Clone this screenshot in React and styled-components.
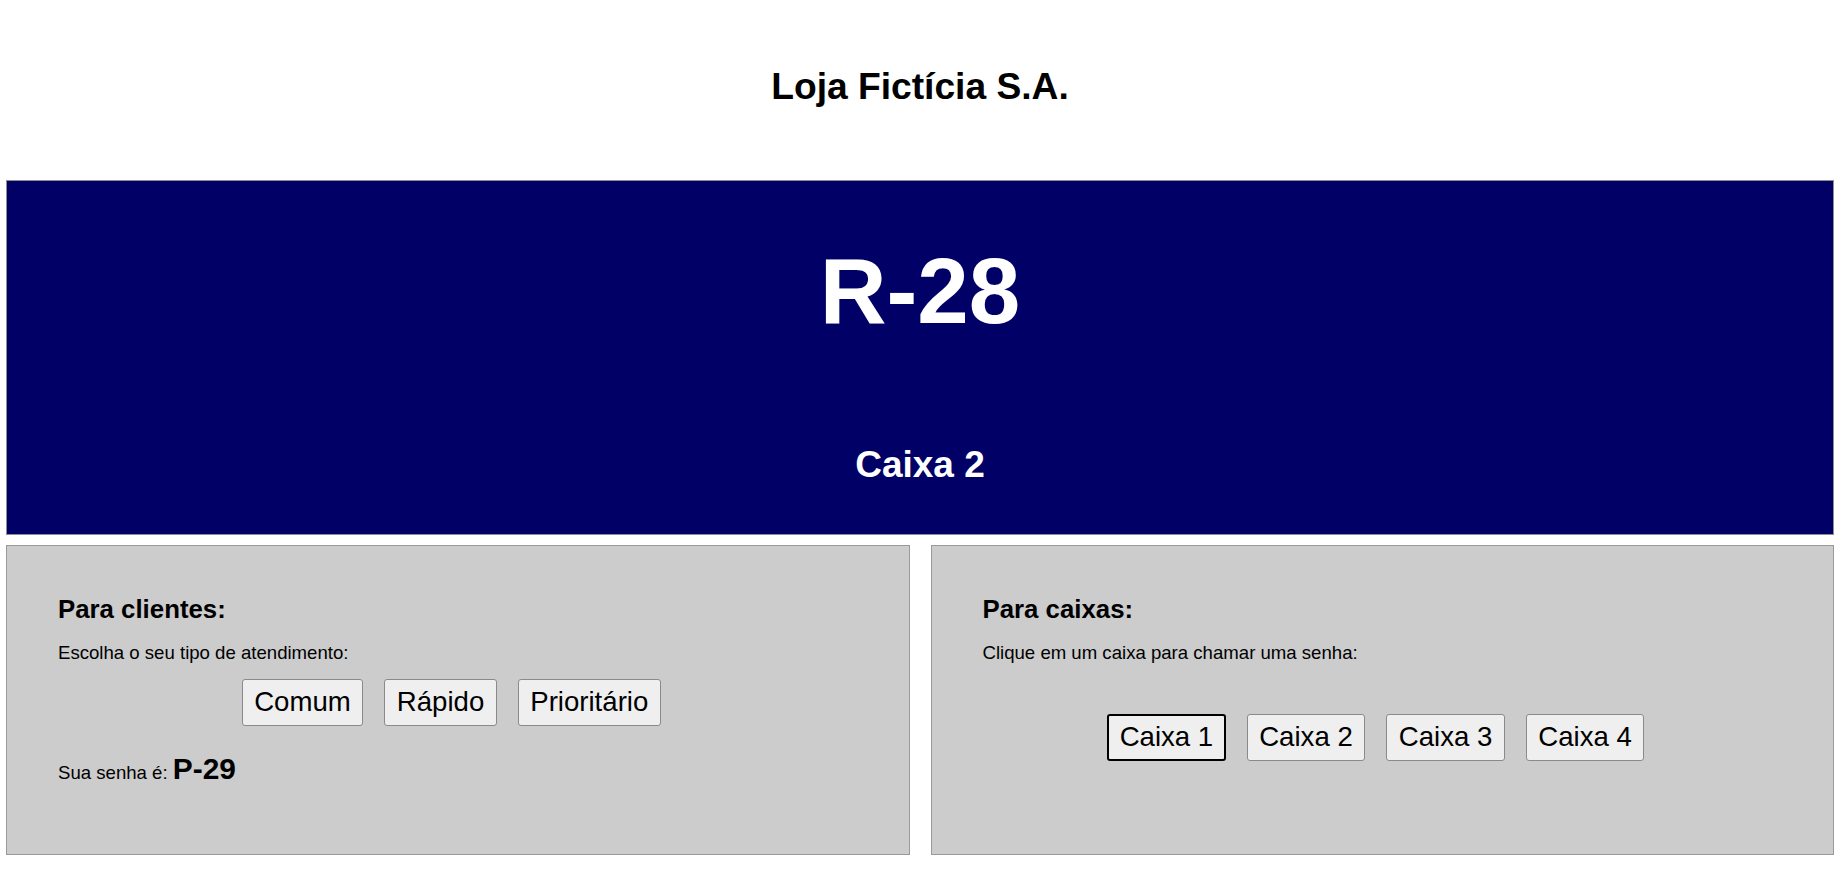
import React from 'react'
import styled, { createGlobalStyle } from 'styled-components'

const GlobalStyle = createGlobalStyle`
  html, body {
    margin: 0;
    padding: 0;
    background: #fff;
  }
  body {
    font-family: "Liberation Sans", Arial, sans-serif;
    line-height: 1.15;
    color: #000;
  }
`

const Page = styled.div`
  padding: 65px 8px 0 6px;
`

const StoreTitle = styled.h1`
  margin: 0 0 72px;
  font-size: 37.2px;
  font-weight: bold;
  text-align: center;
`

const Display = styled.section`
  box-sizing: border-box;
  height: 355px;
  background: #000066;
  border: 1px solid #8f8f8f;
  color: #fff;
  display: flex;
  flex-direction: column;
  align-items: center;
  padding-top: 57px;
`

const CurrentTicket = styled.div`
  font-size: 92.5px;
  font-weight: bold;
`

const CurrentDesk = styled.div`
  margin-top: 100px;
  font-size: 37px;
  font-weight: bold;
`

const Panels = styled.div`
  display: grid;
  grid-template-columns: 1fr 1fr;
  gap: 21px;
  margin-top: 10px;
`

const Panel = styled.section`
  box-sizing: border-box;
  height: 310px;
  background: #cccccc;
  border: 1px solid #9a9a9a;
  padding: 49px 51px 0;
`

const PanelTitle = styled.h2`
  margin: 0;
  font-size: 25.8px;
  font-weight: bold;
`

const Hint = styled.p`
  margin: 18px 0 0;
  font-size: 18.6px;
`

const ButtonRow = styled.div`
  display: flex;
  justify-content: center;
  gap: 21px;
  padding-right: 13px;
  margin-top: ${p => p.offset}px;
`

const Button = styled.button`
  font-family: "Liberation Sans", Arial, sans-serif;
  font-size: 27.6px;
  line-height: 1.15;
  color: #000;
  background: #efefef;
  border: ${p => (p.focused ? '2px solid #000' : '1px solid #8a8a8a')};
  border-radius: 3px;
  padding: ${p => (p.focused ? '5.5px 10.5px' : '6.5px 11.5px')};
  cursor: pointer;
`

const YourTicket = styled.p`
  margin: 26px 0 0;
  font-size: 18.6px;
`

const TicketCode = styled.strong`
  font-size: 29.9px;
`

const ticketTypes = ['Comum', 'Rápido', 'Prioritário']
const desks = ['Caixa 1', 'Caixa 2', 'Caixa 3', 'Caixa 4']

export default function App() {
  return (
    <>
      <GlobalStyle />
      <Page>
        <StoreTitle>Loja Fictícia S.A.</StoreTitle>
        <Display>
          <CurrentTicket>R-28</CurrentTicket>
          <CurrentDesk>Caixa 2</CurrentDesk>
        </Display>
        <Panels>
          <Panel>
            <PanelTitle>Para clientes:</PanelTitle>
            <Hint>Escolha o seu tipo de atendimento:</Hint>
            <ButtonRow offset={15}>
              {ticketTypes.map(t => (
                <Button key={t}>{t}</Button>
              ))}
            </ButtonRow>
            <YourTicket>
              Sua senha é: <TicketCode>P-29</TicketCode>
            </YourTicket>
          </Panel>
          <Panel>
            <PanelTitle>Para caixas:</PanelTitle>
            <Hint>Clique em um caixa para chamar uma senha:</Hint>
            <ButtonRow offset={50}>
              {desks.map((d, i) => (
                <Button key={d} focused={i === 0}>
                  {d}
                </Button>
              ))}
            </ButtonRow>
          </Panel>
        </Panels>
      </Page>
    </>
  )
}
